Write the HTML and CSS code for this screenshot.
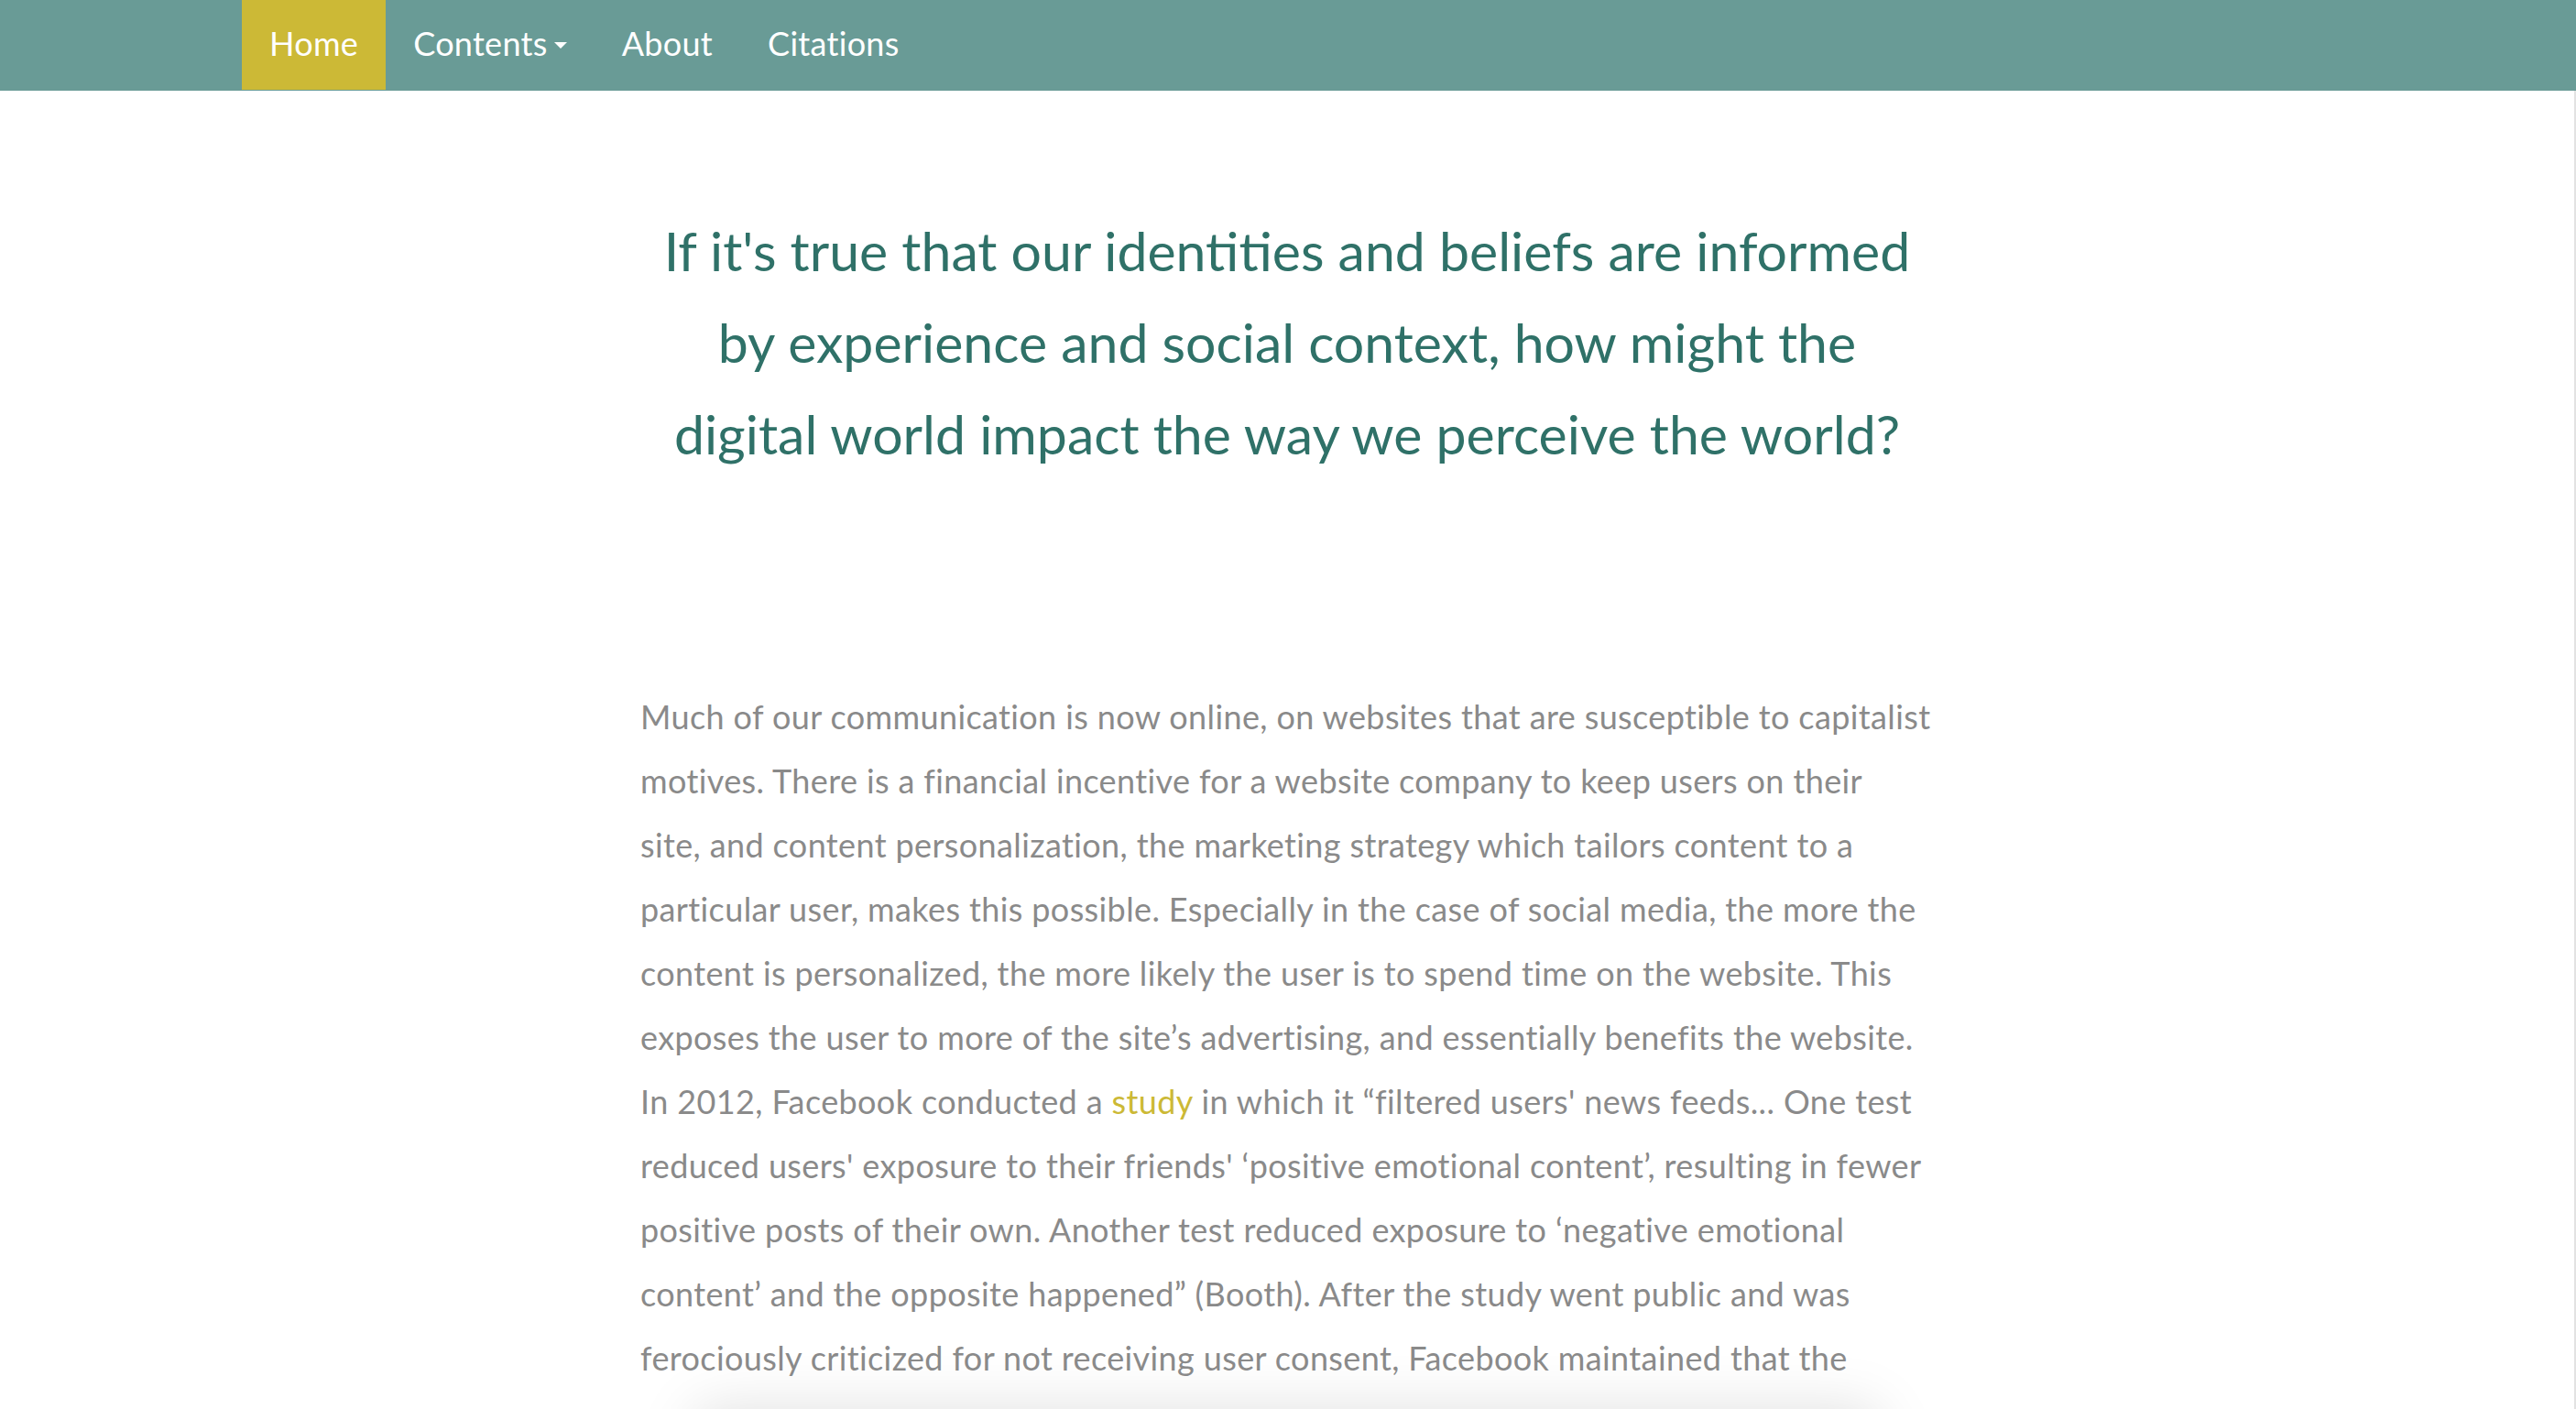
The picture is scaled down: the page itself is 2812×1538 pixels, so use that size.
FILE: index.html
```html
<!DOCTYPE html>
<html lang="en">
<head>
<meta charset="utf-8">
<title>Home</title>
<link rel="stylesheet" href="styles.css">
</head>
<body>
<nav class="navbar">
  <ul class="nav">
    <li><a class="nav-link active" href="#">Home</a></li>
    <li><a class="nav-link" href="#">Contents<span class="caret"></span></a></li>
    <li><a class="nav-link" href="#">About</a></li>
    <li><a class="nav-link" href="#">Citations</a></li>
  </ul>
</nav>
<main class="main">
  <h2 class="lead-question">If it's true that our identities and beliefs are informed by experience and social context, how might the digital world impact the way we perceive the world?</h2>
  <p class="body-text">Much of our communication is now online, on websites that are susceptible to capitalist<br>
motives. There is a financial incentive for a website company to keep users on their<br>
site, and content personalization, the marketing strategy which tailors content to a<br>
particular user, makes this possible. Especially in the case of social media, the more the<br>
content is personalized, the more likely the user is to spend time on the website. This<br>
exposes the user to more of the site’s advertising, and essentially benefits the website.<br>
In 2012, Facebook conducted a <a class="inline-link" href="#">study</a> in which it “filtered users' news feeds... One test<br>
reduced users' exposure to their friends' ‘positive emotional content’, resulting in fewer<br>
positive posts of their own. Another test reduced exposure to ‘negative emotional<br>
content’ and the opposite happened” (Booth). After the study went public and was<br>
ferociously criticized for not receiving user consent, Facebook maintained that the</p>
  <div class="next-card"></div>
</main>
</body>
</html>
```
FILE: styles.css
```css
html, body {
  margin: 0;
  padding: 0;
  background: #ffffff;
}
body {
  font-family: Lato, "Noto Sans", sans-serif;
  overflow: hidden;
  height: 1538px;
}
.navbar {
  background: #699b96;
  height: 99px;
  padding-left: 264px;
  box-sizing: border-box;
}
.nav {
  list-style: none;
  margin: 0;
  padding: 0;
  display: flex;
}
.nav-link {
  display: block;
  height: 98px;
  line-height: 94px;
  padding: 0 30px;
  font-size: 36px;
  letter-spacing: 0.3px;
  color: #ffffff;
  text-decoration: none;
  white-space: nowrap;
}
.nav-link.active {
  background: #ccb936;
}
.caret {
  display: inline-block;
  width: 0;
  height: 0;
  margin-left: 7px;
  vertical-align: 8px;
  border-top: 7px solid #ffffff;
  border-left: 7px solid transparent;
  border-right: 7px solid transparent;
}
.main {
  border-right: 2px solid #e2e2e2;
  min-height: 1439px;
  box-sizing: border-box;
  padding-top: 125px;
}
.lead-question {
  width: 1412px;
  margin: 0 auto;
  font-size: 59px;
  font-weight: 400;
  line-height: 100px;
  text-align: center;
  color: #2f7168;
}
.body-text {
  width: 1412px;
  margin: 223px auto 0;
  font-size: 36px;
  letter-spacing: 0.38px;
  line-height: 70px;
  color: #8a8a8a;
  white-space: nowrap;
}
.inline-link {
  color: #ccb936;
  text-decoration: none;
}
.next-card {
  width: 1290px;
  height: 200px;
  margin: 22px auto 0;
  background: #ffffff;
  box-shadow: 0 0 60px rgba(0, 0, 0, 0.13);
}
```
